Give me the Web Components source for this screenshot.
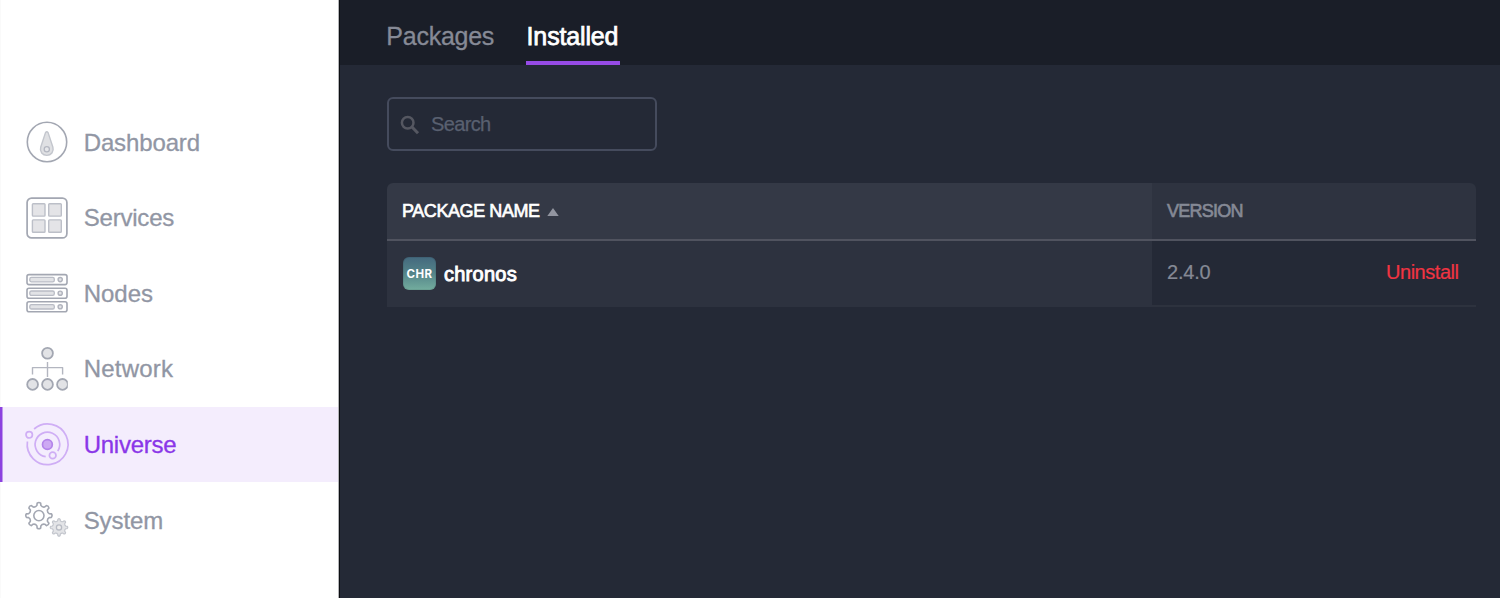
<!DOCTYPE html>
<html lang="en"><head><meta charset="utf-8"><title>Universe</title>
<style>html,body{margin:0;height:100%;overflow:hidden;font-family:"Liberation Sans",Arial,sans-serif}</style></head><body>
<dcos-app></dcos-app>
<script>
const define=(name,html,setup)=>{
  const t=document.createElement('template');t.innerHTML=html;
  customElements.define(name,class extends HTMLElement{
    constructor(){super();this.attachShadow({mode:'open'}).append(t.content.cloneNode(true));}
    connectedCallback(){if(setup)setup(this,this.shadowRoot);}
  });
};
// Cog outline centred on (cx,cy) with eight rounded teeth.
const cog=(cx,cy,ro,ri)=>{
  const p=(r,a)=>{a=a*Math.PI/180;return (cx+r*Math.cos(a)).toFixed(2)+' '+(cy+r*Math.sin(a)).toFixed(2)};
  let d='';
  for(let i=0;i<8;i++){const a=i*45-90;
    d+=(i?'L':'M')+p(ri,a-11)+'L'+p(ro-.6,a-8)+'Q'+p(ro+.6,a)+' '+p(ro-.6,a+8)+'L'+p(ri,a+11)+'Q'+p(ri*.84,a+22.5)+' '+p(ri,a+34);}
  return d+'Z';
};
const server=y=>`<rect x="1" y="${y}" width="40" height="10" rx="2" fill="#fff" stroke-width="1.6"/><rect x="3.8" y="${y+2.8}" width="24.5" height="4.4" rx="1.6" fill="#e2e3e6" stroke="#b9bcc5" stroke-width="1.3"/><circle cx="34.2" cy="${y+5}" r="2.1" fill="#e2e3e6" stroke="#b0b3bd" stroke-width="1.4"/>`;
const icons={
 dashboard:`<circle cx="21" cy="21" r="19.7" stroke-width="1.6" fill="#fff"/><path d="M19.5 11.6Q20.8 9.8 22.1 11.6L26.9 26.2C28.2 30.8 25 34.4 20.8 34.4S13.4 30.8 14.7 26.2Z" fill="#dfe0e3" stroke="#c3c6cd" stroke-width="1.4"/><circle cx="20.8" cy="28.2" r="2.6" fill="#e6e7ea" stroke="#b4b7c1" stroke-width="1.3"/>`,
 services:`<rect x="1.1" y="1.1" width="39.8" height="39.8" rx="4.5" stroke-width="1.7" fill="#fff"/><g fill="#e4e4e7" stroke="#bcbfc8" stroke-width="1.4"><rect x="6.4" y="6.7" width="12.6" height="12.4" rx=".8"/><rect x="22.7" y="6.7" width="12.6" height="12.4" rx=".8"/><rect x="6.4" y="22.9" width="12.6" height="12.4" rx=".8"/><rect x="22.7" y="22.9" width="12.6" height="12.4" rx=".8"/></g>`,
 nodes:server(2.6)+server(16.2)+server(29.8),
 network:`<clipPath id="edge"><path d="M-2-3H41.8V47H-2Z"/></clipPath><path d="M21.5 14V29M6.5 26.5V19.6H36.6V26.5" stroke="#b3b6c0" stroke-width="1.4"/><g fill="#e2e3e6" stroke-width="1.8" clip-path="url(#edge)"><circle cx="21.5" cy="5.2" r="5.4"/><circle cx="6.6" cy="36.4" r="5.4"/><circle cx="21.5" cy="36.4" r="5.4"/><circle cx="36.5" cy="36.4" r="5.4"/></g>`,
 universe:`<g stroke="#cfaef5" stroke-width="1.7"><path d="M8.1 6A20.4 20.4 0 1 1 1.4 18.5"/><path d="M19.7 33.7A12.3 12.3 0 1 1 31.8 28.1"/><circle cx="3.2" cy="11.8" r="3.2"/><circle cx="26.7" cy="32.4" r="3.3"/></g><circle cx="21.4" cy="21.5" r="4.9" fill="#cda9f3" stroke="#b384ea" stroke-width="1.7"/>`,
 system:`<path d="${cog(12.9,16.6,13.2,10.4)}" stroke-width="1.6"/><circle cx="12.9" cy="16.6" r="5.1" stroke-width="1.6"/><path d="${cog(33,28.4,8.8,6.9)}" fill="#e3e4e7" stroke="#c3c6cd" stroke-width="1.2"/><circle cx="33" cy="28.4" r="2.6" fill="#eee" stroke="#b8bbc4" stroke-width="1.3"/>`
};
define('nav-item',`<style>
:host{display:flex;align-items:center;box-sizing:border-box;height:75.6px;padding-left:25.7px;color:#9196a4;font-size:24px}
:host([active]){background:#f4edfd;color:#8a36e8;box-shadow:inset 2.5px 0 #8c42df}
svg{width:42px;height:42px;overflow:visible;flex:none;margin-right:16px}
span{line-height:28px;-webkit-text-stroke:.3px currentColor;margin-top:1.4px}
</style><svg viewBox="0 0 42 42" fill="none" stroke="#a3a7b2" stroke-linejoin="round"></svg><span><slot></slot></span>`,
(h,r)=>{r.querySelector('svg').innerHTML=icons[h.getAttribute('icon')];r.querySelector('span').style.letterSpacing=h.getAttribute('spacing')||'0';});
define('side-bar',`<style>:host{display:block;box-sizing:border-box;width:340px;flex:none;padding-top:104.2px;background:#fff;border-right:1px solid #0c0e12;box-shadow:inset -1px 0 #b4b5b8,inset 1px 0 #fafafa}
nav{margin-right:1px}</style><nav><slot></slot></nav>`);
define('tab-item',`<style>:host{display:block;box-sizing:border-box;height:65px;padding:22px 1px 0;color:#868a96;font-size:25px;line-height:29px;-webkit-text-stroke:.3px currentColor}
:host([active]){color:#fff;padding:22px 1.2px 0 .7px;border-bottom:4px solid #964be6;-webkit-text-stroke:.75px #fff}</style><slot></slot>`,
(h)=>{h.style.letterSpacing=h.getAttribute('spacing')});
define('tab-bar',`<style>:host{display:flex;height:65px;background:#1a1e28;padding-left:45.3px;gap:30.8px}</style><slot></slot>`);
define('search-box',`<style>:host{display:flex;align-items:center;box-sizing:border-box;width:270px;height:54px;border:2px solid #454b5d;border-radius:6px;padding-left:11px;color:#596070;font-size:20px}
svg{width:20px;height:20px;margin:2px 11px 0 0}span{line-height:24px;letter-spacing:-.65px;-webkit-text-stroke:.25px currentColor}</style>
<svg viewBox="0 0 20 20" fill="none" stroke="#555761" stroke-width="2.5"><circle cx="7.7" cy="7.7" r="5.8"/><path d="M12 12L18 18.3" stroke-width="3"/></svg><span><slot></slot></span>`);
define('package-badge',`<style>:host{display:flex;align-items:center;justify-content:center;box-sizing:border-box;width:33px;height:33px;border-radius:6px;background:linear-gradient(#44697e,#528188 45%,#73ad9e);box-shadow:inset 0 0 0 1px #0001;color:#fff;font:bold 11.5px Inter,sans-serif;letter-spacing:.4px}</style><slot></slot>`);
define('package-table',`<style>
:host{display:grid;grid-template-columns:765px 324px;width:1089px;margin-top:32px}
.h,.c{display:flex;box-sizing:border-box;padding-left:15px}
.h{height:58px;border-bottom:2px solid #50535f;font-size:18px;padding-top:18px;line-height:21px;background:#2e3340;color:#858995;-webkit-text-stroke:.65px currentColor}
.n{background:#343946;color:#fff;border-radius:6px 0 0}.v{border-radius:0 6px 0 0}
.n span{letter-spacing:-.42px}.v span{letter-spacing:-.75px}
svg{width:12px;height:8px;margin:7px 0 0 7px;stroke:none}
.c{height:66px;font-size:20px;line-height:24px;color:#858995}
.name{background:#2d323f;color:#fff;padding:16px 0 0 16px;gap:8px}
.name span{line-height:34px;letter-spacing:.25px;-webkit-text-stroke:.9px #fff}
.ver{border-bottom:2px solid #2d323e;padding:19px 17.5px 0 15px;justify-content:space-between;-webkit-text-stroke:.2px currentColor}
.ver span{letter-spacing:-.2px}
.ver .un{color:#f03442;letter-spacing:-.47px}
</style>
<div class="h n"><span>PACKAGE NAME</span><svg viewBox="0 0 12 8"><path d="M6 0L11.7 8H.3Z" fill="#9295a0"/></svg></div><div class="h v"><span>VERSION</span></div>
<div class="c name"><package-badge>CHR</package-badge><span>chronos</span></div><div class="c ver"><span>2.4.0</span><span class="un">Uninstall</span></div>`);
define('dcos-app',`<style>:host{display:flex;height:100vh;background:#242936}main{flex:1;min-width:0}section{padding:32px 0 0 47px}</style>
<side-bar><nav-item icon="dashboard" spacing="-.13px">Dashboard</nav-item><nav-item icon="services" spacing="-.2px">Services</nav-item><nav-item icon="nodes">Nodes</nav-item><nav-item icon="network" spacing=".2px">Network</nav-item><nav-item icon="universe" spacing="-.25px" active>Universe</nav-item><nav-item icon="system" spacing="-.1px">System</nav-item></side-bar>
<main><tab-bar><tab-item spacing="-.25px">Packages</tab-item><tab-item active spacing="-.15px">Installed</tab-item></tab-bar><section><search-box>Search</search-box><package-table></package-table></section></main>`);
</script></body></html>
